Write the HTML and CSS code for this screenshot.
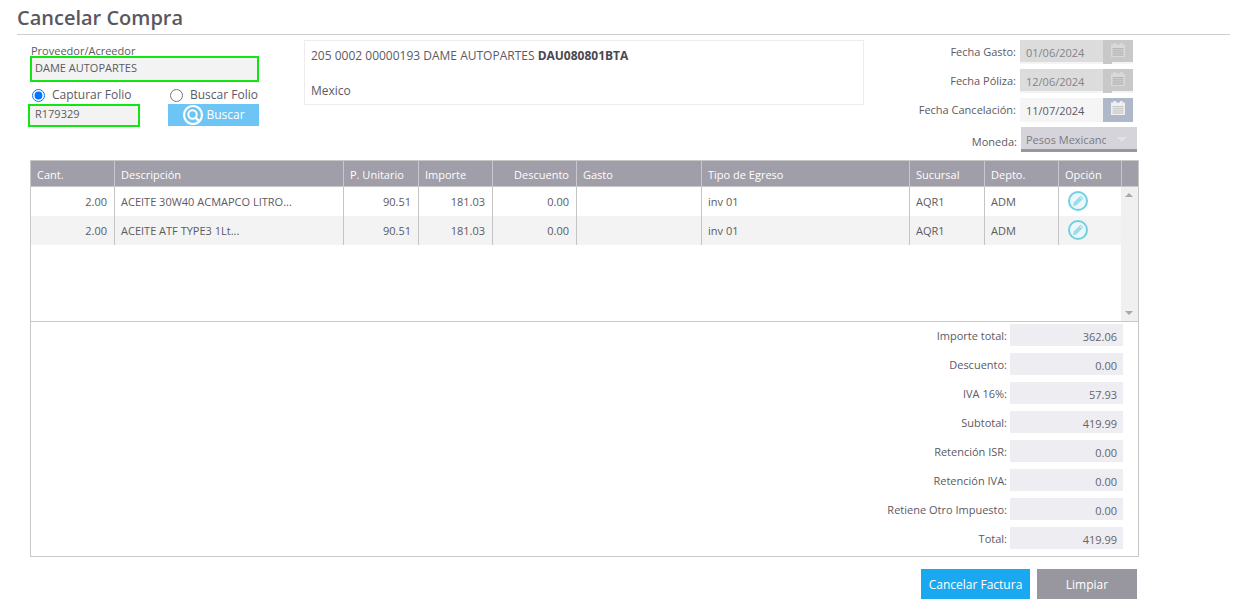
FILE: index.html
```html
<!DOCTYPE html>
<html lang="es">
<head>
<meta charset="utf-8">
<title>Cancelar Compra</title>
<link rel="stylesheet" href="styles.css">
</head>
<body>
<svg class="defs" width="0" height="0" aria-hidden="true">
  <symbol id="cal" viewBox="0 0 14 14">
    <path d="M0 1.5h14V14H0z" fill="currentColor"/>
    <path d="M2.5 0h2.5v3H2.500zM9 0h2.500v3H9z" fill="currentColor"/>
    <path d="M1 5.500h12M1 7.700h12M1 9.900h12M1 12.100h12M3 5v8M5 5v8M7 5v8M9 5v8M11 5v8" stroke="#000" stroke-opacity=".16" stroke-width=".7" fill="none"/>
  </symbol>
  <symbol id="edit" viewBox="0 0 20 20">
    <circle cx="10" cy="10" r="9" fill="#eaf8fb" stroke="#72cfe0" stroke-width="2"/>
    <path d="M4.800 15.200l1-3.800 6.800-6.800 2.800 2.800-6.800 6.800z" fill="#9ddcea"/>
    <path d="M11.600 5.600l2.800 2.800" stroke="#eaf8fb" stroke-width=".8"/>
  </symbol>
</svg>
<main class="page">
  <h1 class="title">Cancelar Compra</h1>
  <section class="top">
    <div class="supplier">
      <label class="field-label">Proveedor/Acreedor</label>
      <div class="input-green wide">DAME AUTOPARTES</div>
      <div class="radios">
        <label class="radio-item first"><input class="radio" type="radio" name="folio" checked>Capturar Folio</label>
        <label class="radio-item"><input class="radio" type="radio" name="folio">Buscar Folio</label>
      </div>
      <div class="folio-row">
        <div class="input-green folio">R179329</div>
        <button class="search">
          <svg width="22" height="20" viewBox="0 0 22 20"><circle cx="11" cy="10" r="9" fill="none" stroke="#fff" stroke-width="2.200"/><circle cx="10.500" cy="9.500" r="4.200" fill="none" stroke="#fff" stroke-width="2"/><path d="M13.500 12.500l3 3" stroke="#fff" stroke-width="2.400"/></svg>
          Buscar
        </button>
      </div>
    </div>
    <div class="info">
      <p class="info-line">205 0002 00000193 DAME AUTOPARTES <b>DAU080801BTA</b></p>
      <p class="info-line country">Mexico</p>
    </div>
    <div class="dates">
      <div class="date-row"><span class="date-label">Fecha Gasto:</span><span class="date disabled"><span class="date-value">01/06/2024</span><span class="date-btn"><svg width="14" height="14"><use href="#cal"/></svg></span></span></div>
      <div class="date-row"><span class="date-label">Fecha Póliza:</span><span class="date disabled"><span class="date-value">12/06/2024</span><span class="date-btn"><svg width="14" height="14"><use href="#cal"/></svg></span></span></div>
      <div class="date-row"><span class="date-label">Fecha Cancelación:</span><span class="date active"><span class="date-value">11/07/2024</span><span class="date-btn"><svg width="14" height="14"><use href="#cal"/></svg></span></span></div>
      <div class="date-row money"><span class="date-label">Moneda:</span><span class="select"><span class="select-text">Pesos Mexicanos</span><span class="caret"></span></span></div>
    </div>
  </section>

  <section class="grid-box">
    <div class="row head">
      <span class="c c1">Cant.</span><span class="c c2">Descripción</span><span class="c c3">P. Unitario</span><span class="c c4">Importe</span><span class="c c5 num">Descuento</span><span class="c c6">Gasto</span><span class="c c7">Tipo de Egreso</span><span class="c c8">Sucursal</span><span class="c c9">Depto.</span><span class="c c10">Opción</span><span class="c c11"></span>
    </div>
    <div class="grid-body">
      <div class="rows">
        <div class="row">
          <span class="c c1 num">2.00</span><span class="c c2">ACEITE 30W40 ACMAPCO LITRO...</span><span class="c c3 num">90.51</span><span class="c c4 num">181.03</span><span class="c c5 num">0.00</span><span class="c c6"></span><span class="c c7">inv 01</span><span class="c c8">AQR1</span><span class="c c9">ADM</span><span class="c c10"><svg class="edit" width="20" height="20"><use href="#edit"/></svg></span>
        </div>
        <div class="row alt">
          <span class="c c1 num">2.00</span><span class="c c2">ACEITE ATF TYPE3 1Lt...</span><span class="c c3 num">90.51</span><span class="c c4 num">181.03</span><span class="c c5 num">0.00</span><span class="c c6"></span><span class="c c7">inv 01</span><span class="c c8">AQR1</span><span class="c c9">ADM</span><span class="c c10"><svg class="edit" width="20" height="20"><use href="#edit"/></svg></span>
        </div>
      </div>
      <div class="scroll"><span class="arrow up"></span><span class="arrow down"></span></div>
    </div>
    <div class="totals">
      <div class="total-row"><span class="total-label">Importe total:</span><span class="total-value">362.06</span></div>
      <div class="total-row"><span class="total-label">Descuento:</span><span class="total-value">0.00</span></div>
      <div class="total-row"><span class="total-label">IVA 16%:</span><span class="total-value">57.93</span></div>
      <div class="total-row"><span class="total-label">Subtotal:</span><span class="total-value">419.99</span></div>
      <div class="total-row"><span class="total-label">Retención ISR:</span><span class="total-value">0.00</span></div>
      <div class="total-row"><span class="total-label">Retención IVA:</span><span class="total-value">0.00</span></div>
      <div class="total-row"><span class="total-label">Retiene Otro Impuesto:</span><span class="total-value">0.00</span></div>
      <div class="total-row"><span class="total-label">Total:</span><span class="total-value">419.99</span></div>
    </div>
  </section>

  <div class="actions">
    <button class="btn primary">Cancelar Factura</button>
    <button class="btn grey">Limpiar</button>
  </div>
</main>
</body>
</html>
```
FILE: styles.css
```css
* { box-sizing: border-box; }
html, body { margin: 0; padding: 0; background: #fff; }
body { font-family: "Open Sans", "Liberation Sans", sans-serif; font-size: 11px; color: #5c5a62; height: 607px; overflow: hidden; }
.defs { display: block; height: 0; }
.page { width: 1230px; margin-left: 17px; position: relative; }
.title { margin: 0; height: 35px; padding-top: 4px; font-size: 20px; line-height: 28px; font-weight: 600; color: #5a5762; border-bottom: 1px solid #cfcfcf; width: 1213px; }

.top { display: flex; height: 125px; }
.supplier { width: 242px; margin-left: 13px; flex: none; }
.field-label { display: block; height: 20px; padding: 9px 0 0 1px; line-height: 14px; font-size: 11px; }
.input-green { border: 2px solid #12e612; background: #f3f3f3; font-size: 11px; line-height: 20px; height: 26px; padding-left: 3px; color: #5c5a62; }
.wide { width: 229px; margin-top: 1px; }
.radios { display: flex; height: 22px; align-items: center; font-size: 12px; padding: 4px 0 0 2px; line-height: 14px; }
.radio-item { display: flex; align-items: center; color: #5c5a62; }
.radio-item.first { width: 138px; }
.radio { width: 13px; height: 13px; margin: 1px 7px 0 0; flex: none; }
.folio-row { display: flex; margin-left: -2px; }
.folio { width: 112px; height: 23px; line-height: 15px; padding-left: 5px; }
.search { width: 91px; height: 22px; margin-left: 28px; border: 0; padding: 0 0 1px; background: #6cc5f5; color: #fff; font-family: inherit; font-size: 12px; font-weight: 400; display: flex; align-items: center; justify-content: center; gap: 2px; }
.search svg { flex: none; }

.info { width: 560px; height: 65px; margin: 5px 0 0 32px; border: 1px solid #ececec; padding: 6px 6px; flex: none; font-size: 12px; }
.info-line { margin: 0; line-height: 18px; color: #5c5a62; }
.info-line b { color: #4a4850; font-weight: 700; }
.country { margin-top: 17px; }

.dates { width: 273px; flex: none; padding-top: 5px; }
.date-row { display: flex; justify-content: flex-end; height: 29px; padding-right: 4px; }
.date-label { line-height: 23px; margin-right: 4px; }
.date { display: flex; width: 113px; height: 24px; font-size: 11px; }
.date-value { width: 83px; line-height: 26px; padding-left: 6px; }
.date-btn { width: 30px; height: 24px; display: flex; align-items: center; justify-content: center; padding-bottom: 4px; color: #fff; }
.disabled { background: linear-gradient(#dcdcdc 22px, #f4f4f4 22px); color: #85838a; }
.disabled .date-btn { background: linear-gradient(#c8c8c8 22px, transparent 22px), linear-gradient(90deg, #c8c8c8 9px, transparent 9px); color: #d9d9d9; }
.active { background: #f5f5f5; color: #5c5a62; }
.active .date-btn { background: #aeb8c8; color: #f0f0f0; }
.money { padding-right: 0; height: 25px; }
.money .date-label { line-height: 29px; margin-right: 4px; }
.select { width: 116px; height: 25px; background: #d5d4da; border-bottom: 3px solid #98969f; display: flex; align-items: center; padding: 2px 0 0 5px; overflow: hidden; }
.select-text { width: 80px; overflow: hidden; white-space: nowrap; color: #7c7a82; font-size: 11px; flex: none; }
.caret { width: 0; height: 0; border: 5px solid transparent; border-top-color: #e3e2e6; border-bottom: 0; margin-left: 11px; flex: none; }

.grid-box { width: 1109px; height: 397px; margin-left: 13px; border: 1px solid #c8c8c8; }
.row { display: flex; height: 29px; align-items: stretch; background: #fff; }
.alt { background: #f3f3f3; }
.head { height: 26px; background: #a09ea8; color: #fff; font-size: 11px; border-bottom: 1px solid #c8c8c8; }
.c { display: block; padding: 0 6px; line-height: 30px; border-right: 1px solid #c4c4c4; white-space: nowrap; overflow: hidden; flex: none; font-size: 11px; }
.head .c { line-height: 27px; font-size: 11px; border-right-color: #c9c8cd; }
.num { text-align: right; padding-right: 7px; }
.c1 { width: 84px; }
.c2 { width: 229px; }
.c3 { width: 75px; }
.c4 { width: 74px; }
.c5 { width: 84px; }
.c6 { width: 125px; }
.c7 { width: 208px; }
.c8 { width: 75px; }
.c9 { width: 74px; }
.c10 { width: 63px; }
.c11 { width: 16px; border-right: 0; }
.row:not(.head) .c10 { border-right: 0; }
.edit { display: block; margin: 4px 0 0 3px; }
.grid-body { display: flex; height: 135px; border-bottom: 1px solid #c8c8c8; }
.rows { width: 1090px; flex: none; }
.scroll { background: #f0f0f0; position: relative; flex: none; width: 17px; }
.arrow { position: absolute; left: 4px; width: 0; height: 0; border: 4px solid transparent; }
.up { top: 6px; border-bottom: 4px solid #a8a8a8; border-top: 0; }
.down { bottom: 6px; border-top: 4px solid #a8a8a8; border-bottom: 0; }

.totals { padding: 2px 15px 0 0; }
.total-row { display: flex; justify-content: flex-end; height: 29px; }
.total-label { line-height: 24px; margin-right: 3px; }
.total-value { width: 113px; height: 22px; background: #eeeef2; text-align: right; padding-right: 6px; line-height: 26px; font-size: 11px; color: #65636b; }

.actions { display: flex; justify-content: flex-end; gap: 7px; width: 1120px; margin-top: 12px; }
.btn { height: 30px; border: 0; color: #fff; font-family: inherit; font-size: 12px; padding: 0; }
.primary { width: 109px; background: #1aa9f0; }
.grey { width: 100px; background: #98969f; }
```
